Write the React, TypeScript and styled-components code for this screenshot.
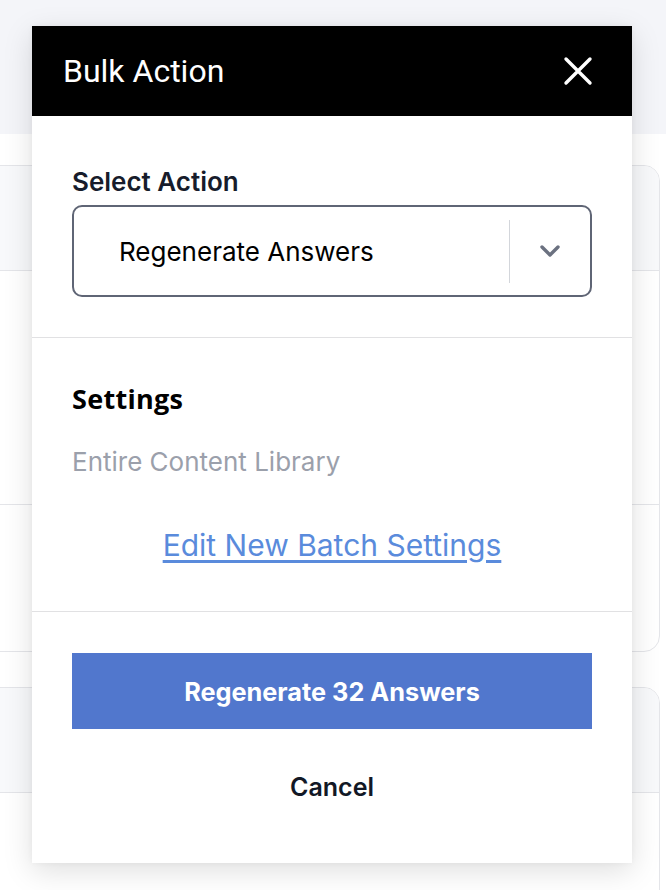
import React from "react";
import styled, { createGlobalStyle } from "styled-components";

const GlobalStyle = createGlobalStyle`
  html, body {
    margin: 0;
    padding: 0;
    background: #ffffff;
    font-family: Inter, Roboto, "Liberation Sans", sans-serif;
  }
  * {
    box-sizing: border-box;
  }
`;

type Card = {
  rows: number[];
};

const cards: Card[] = [
  { rows: [234, 146] },
  { rows: [200] },
];

const App: React.FC = () => {
  return (
    <>
      <GlobalStyle />
      <StyledPage>
        <StyledTopBand />
        <StyledCardList>
          {cards.map((card, i) => (
            <StyledCard key={i}>
              <StyledCardHeader />
              {card.rows.map((h, j) => (
                <StyledCardRow key={j} style={{ height: h }} />
              ))}
            </StyledCard>
          ))}
        </StyledCardList>

        <StyledModal>
          <StyledModalHeader>
            <span>Bulk Action</span>
            <StyledClose aria-label="Close">
              <svg width="30" height="30" viewBox="0 0 30 30" fill="none">
                <path
                  d="M3 3 L27 27 M27 3 L3 27"
                  stroke="#ffffff"
                  strokeWidth="3.4"
                  strokeLinecap="round"
                />
              </svg>
            </StyledClose>
          </StyledModalHeader>

          <StyledSection pad="51px 40px 40px">
            <StyledLabel>Select Action</StyledLabel>
            <StyledSelect>
              <StyledSelectValue>Regenerate Answers</StyledSelectValue>
              <StyledSelectDivider />
              <StyledChevron>
                <svg width="22" height="14" viewBox="0 0 22 14" fill="none">
                  <path
                    d="M3 3 L11 11 L19 3"
                    stroke="#6b7180"
                    strokeWidth="3.4"
                    strokeLinecap="round"
                    strokeLinejoin="round"
                  />
                </svg>
              </StyledChevron>
            </StyledSelect>
          </StyledSection>

          <StyledSection pad="46px 40px 51px">
            <StyledHeading>Settings</StyledHeading>
            <StyledMuted>Entire Content Library</StyledMuted>
            <StyledLink href="#">Edit New Batch Settings</StyledLink>
          </StyledSection>

          <StyledSection pad="41px 40px 61px" last>
            <StyledPrimary>Regenerate 32 Answers</StyledPrimary>
            <StyledCancel>Cancel</StyledCancel>
          </StyledSection>
        </StyledModal>
      </StyledPage>
    </>
  );
};

const StyledPage = styled.div`
  position: relative;
  width: 666px;
  height: 890px;
  overflow: hidden;
  background: #ffffff;
`;

const StyledTopBand = styled.div`
  height: 134px;
  background: #f4f5f9;
`;

const StyledCardList = styled.div`
  display: flex;
  flex-direction: column;
  gap: 35px;
  padding: 31px 6px 0 0;
  margin-left: -30px;
`;

const StyledCard = styled.div`
  border: 1.5px solid #e4e5e9;
  border-radius: 16px;
  overflow: hidden;
  background: #ffffff;
`;

const StyledCardHeader = styled.div`
  height: 105px;
  background: #f8f9fb;
  border-bottom: 1.5px solid #e4e5e9;
`;

const StyledCardRow = styled.div`
  border-bottom: 1.5px solid #e4e5e9;
  &:last-child {
    border-bottom: none;
  }
`;

const StyledModal = styled.div`
  position: absolute;
  top: 26px;
  left: 32px;
  width: 600px;
  background: #ffffff;
  box-shadow: 0 8px 28px rgba(0, 0, 0, 0.13), 0 0 6px rgba(0, 0, 0, 0.04);
`;

const StyledModalHeader = styled.div`
  height: 90px;
  background: #000000;
  color: #ffffff;
  display: flex;
  align-items: center;
  justify-content: space-between;
  padding: 0 39px 0 31px;
  font-family: Roboto, sans-serif;
  font-size: 32px;
  font-weight: 400;
`;

const StyledClose = styled.button`
  display: flex;
  padding: 0;
  border: none;
  background: transparent;
  cursor: pointer;
`;

const StyledSection = styled.div<{ pad: string; last?: boolean }>`
  display: flex;
  flex-direction: column;
  padding: ${(p) => p.pad};
  border-bottom: ${(p) => (p.last ? "none" : "1.5px solid #e1e1e3")};
`;

const StyledLabel = styled.div`
  font-size: 26px;
  line-height: 30px;
  font-weight: 600;
  color: #171c2b;
  margin-bottom: 8px;
`;

const StyledSelect = styled.div`
  height: 92px;
  border: 2.5px solid #5f6575;
  border-radius: 10px;
  display: flex;
  align-items: center;
  padding: 0 0 0 45px;
`;

const StyledSelectValue = styled.div`
  flex: 1;
  font-size: 26px;
  color: #000000;
`;

const StyledSelectDivider = styled.div`
  width: 1.5px;
  height: 63px;
  background: #d3d6db;
`;

const StyledChevron = styled.div`
  width: 80px;
  display: flex;
  justify-content: center;
  align-items: center;
`;

const StyledHeading = styled.div`
  font-family: "Open Sans", sans-serif;
  font-size: 27px;
  line-height: 30px;
  font-weight: 700;
  letter-spacing: 0.3px;
  color: #000000;
`;

const StyledMuted = styled.div`
  margin-top: 33px;
  font-size: 26px;
  line-height: 30px;
  color: #9ba0ab;
`;

const StyledLink = styled.a`
  margin-top: 53px;
  align-self: center;
  font-size: 30px;
  line-height: 30px;
  color: #5a8bdc;
  text-decoration: underline;
  text-underline-offset: 4px;
`;

const StyledPrimary = styled.button`
  height: 76px;
  border: none;
  background: #5177cd;
  color: #ffffff;
  font-family: Inter, Roboto, sans-serif;
  font-size: 25.3px;
  font-weight: 700;
  cursor: pointer;
`;

const StyledCancel = styled.button`
  margin-top: 43px;
  align-self: center;
  padding: 0;
  border: none;
  background: transparent;
  color: #121826;
  font-family: Inter, Roboto, sans-serif;
  font-size: 25px;
  line-height: 30px;
  font-weight: 600;
  cursor: pointer;
`;

export default App;
